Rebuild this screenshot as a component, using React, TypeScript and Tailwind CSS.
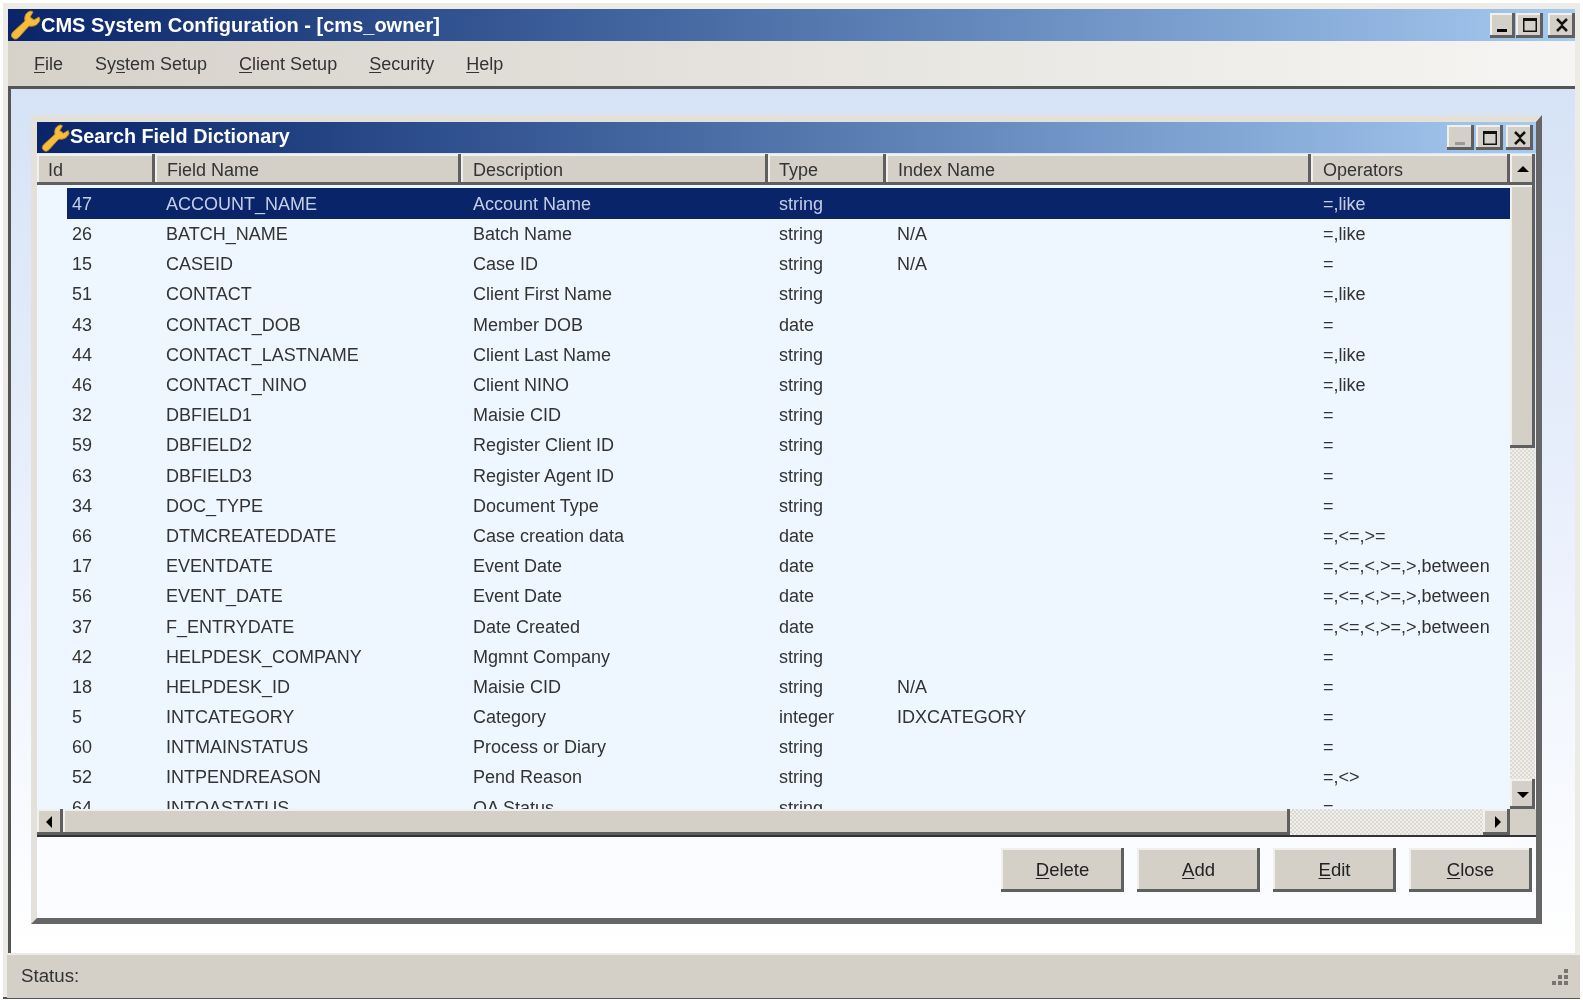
import type { ReactNode } from 'react';

type Row = [string, string, string, string, string, string];

const rows: Row[] = [
  ['26', 'BATCH_NAME', 'Batch Name', 'string', 'N/A', '=,like'],
  ['15', 'CASEID', 'Case ID', 'string', 'N/A', '='],
  ['51', 'CONTACT', 'Client First Name', 'string', '', '=,like'],
  ['43', 'CONTACT_DOB', 'Member DOB', 'date', '', '='],
  ['44', 'CONTACT_LASTNAME', 'Client Last Name', 'string', '', '=,like'],
  ['46', 'CONTACT_NINO', 'Client NINO', 'string', '', '=,like'],
  ['32', 'DBFIELD1', 'Maisie CID', 'string', '', '='],
  ['59', 'DBFIELD2', 'Register Client ID', 'string', '', '='],
  ['63', 'DBFIELD3', 'Register Agent ID', 'string', '', '='],
  ['34', 'DOC_TYPE', 'Document Type', 'string', '', '='],
  ['66', 'DTMCREATEDDATE', 'Case creation data', 'date', '', '=,<=,>='],
  ['17', 'EVENTDATE', 'Event Date', 'date', '', '=,<=,<,>=,>,between'],
  ['56', 'EVENT_DATE', 'Event Date', 'date', '', '=,<=,<,>=,>,between'],
  ['37', 'F_ENTRYDATE', 'Date Created', 'date', '', '=,<=,<,>=,>,between'],
  ['42', 'HELPDESK_COMPANY', 'Mgmnt Company', 'string', '', '='],
  ['18', 'HELPDESK_ID', 'Maisie CID', 'string', 'N/A', '='],
  ['5', 'INTCATEGORY', 'Category', 'integer', 'IDXCATEGORY', '='],
  ['60', 'INTMAINSTATUS', 'Process or Diary', 'string', '', '='],
  ['52', 'INTPENDREASON', 'Pend Reason', 'string', '', '=,<>'],
  ['64', 'INTQASTATUS', 'QA Status', 'string', '', '='],
];

const bevel = 'bg-[#d4d0c8] shadow-[inset_-3px_-3px_0_#5f5f5f,inset_2px_2px_0_#f2f0ec]';
const track =
  'bg-[repeating-conic-gradient(#dcd9d2_0_25%,#f0eeea_0_50%)] bg-[length:4px_4px]';

const WrenchIcon = ({ className }: { className: string }) => (
  <svg viewBox="0 0 32 32" className={className}>
    <path
      d="M22 2C17 3 15 7 16 12L4 23C2 25 2 28 4 29C6 31 8 30 10 28L20 17C25 18 29 16 31 11L30 8L25 11L21 8L24 3Z"
      fill="#f6bd3c"
      stroke="#c98a17"
      strokeWidth="1"
      strokeLinejoin="round"
    />
  </svg>
);

const WinButton = ({
  kind,
  disabled,
  w,
}: {
  kind: 'min' | 'max' | 'close';
  disabled?: boolean;
  w: string;
}) => (
  <div className={`flex h-[25px] items-center justify-center ${w} ${bevel}`}>
    <svg viewBox="0 0 20 18" className="h-[18px] w-[20px]">
      {kind === 'min' && <rect x="4" y="13" width="10" height="3" fill={disabled ? '#9a9a96' : '#000'} />}
      {kind === 'max' && (
        <path d="M3 2h14v14H3zM4.500 5v9.500h11V5z" fill="#111" fillRule="evenodd" />
      )}
      {kind === 'close' && (
        <path d="M5 3l5 5 5-5M5 15l5-5 5 5" fill="none" stroke="#111" strokeWidth="2.500" />
      )}
    </svg>
  </div>
);

const Arrow = ({ dir }: { dir: 'up' | 'down' | 'left' | 'right' }) => {
  const d = {
    up: 'M7 3l6 6H1z',
    down: 'M1 5h12L7 11z',
    left: 'M9 1v12L3 7z',
    right: 'M5 1v12l6-6z',
  }[dir];
  return (
    <svg viewBox="0 0 14 14" className="h-[14px] w-[14px]">
      <path d={d} fill="#000" />
    </svg>
  );
};

const MenuItem = ({ before, mark, after }: { before?: string; mark: string; after: string }) => (
  <span>
    {before}
    <span className="underline underline-offset-2">{mark}</span>
    {after}
  </span>
);

const ActionButton = ({ mark, rest }: { mark: string; rest: string }) => (
  <div className={`flex h-[44px] w-[123px] items-center justify-center text-[18.5px] text-[#222] ${bevel}`}>
    <span className="underline underline-offset-2">{mark}</span>
    {rest}
  </div>
);

const HeaderCell = ({ w, pl, children }: { w: string; pl: string; children: ReactNode }) => (
  <div className={`flex h-full shrink-0 items-center ${w} ${pl} ${bevel} text-[#333]`}>{children}</div>
);

const Cell = ({ w, pl, children }: { w: string; pl: string; children: ReactNode }) => (
  <div className={`shrink-0 whitespace-nowrap ${w} ${pl}`}>{children}</div>
);

const RowCells = ({ r }: { r: Row }) => (
  <>
    <Cell w="w-[305px]" pl="pl-[11px]">{r[1]}</Cell>
    <Cell w="w-[307px]" pl="pl-[13px]">{r[2]}</Cell>
    <Cell w="w-[118px]" pl="pl-[12px]">{r[3]}</Cell>
    <Cell w="w-[426px]" pl="pl-[12px]">{r[4]}</Cell>
    <Cell w="w-[169px]" pl="pl-[12px]">{r[5]}</Cell>
  </>
);

export default function App() {
  return (
    <div className="h-[1000px] w-[1583px] overflow-hidden bg-white pt-[3px] pl-[3px] font-['Liberation_Sans',Arial,sans-serif] blur-[0.6px]">
      <div className="flex h-[996px] w-[1577px] flex-col bg-[#ecebe6] px-[5px] pt-[6px] pb-[1px] shadow-[inset_0_-2px_0_#555]">
        {/* main title bar */}
        <div className="flex h-[32px] shrink-0 items-center bg-gradient-to-r from-[#0a246a] to-[#a6caf0] pl-[1px]">
          <WrenchIcon className="h-[32px] w-[32px] shrink-0" />
          <span className="pb-[1px] text-[20px] font-bold text-white">CMS System Configuration - [cms_owner]</span>
          <div className="ml-auto flex items-center">
            <WinButton kind="min" w="w-[25px]" />
            <div className="w-[1px]" />
            <WinButton kind="max" w="w-[27px]" />
            <div className="w-[5px]" />
            <WinButton kind="close" w="w-[27px]" />
          </div>
        </div>

        {/* menu */}
        <div className="flex h-[45px] shrink-0 items-center gap-[32px] bg-gradient-to-r from-[#d6d2ca] to-[#f6f5f3] pt-[2px] pl-[26px] text-[18px] text-[#333]">
          <MenuItem mark="F" after="ile" />
          <MenuItem before="Sy" mark="s" after="tem Setup" />
          <MenuItem mark="C" after="lient Setup" />
          <MenuItem mark="S" after="ecurity" />
          <MenuItem mark="H" after="elp" />
        </div>

        {/* mdi area */}
        <div className="flex flex-1 flex-col border-t-[3px] border-l-[3px] border-t-[#555] border-l-[#555] bg-gradient-to-b from-[#d6e3f6] via-[#eaf0fc] to-white pt-[26px] pl-[20px]">
          <div className="flex h-[809px] w-[1511px] flex-col border-t-[7px] border-r-[6px] border-b-[6px] border-l-[6px] border-t-[#e4e1db] border-r-[#666] border-b-[#666] border-l-[#e4e1db]">
            {/* child title bar */}
            <div className="flex h-[31px] shrink-0 items-center bg-gradient-to-r from-[#0a246a] to-[#a6caf0] pr-[3px] pl-[3px]">
              <WrenchIcon className="h-[30px] w-[30px] shrink-0" />
              <span className="pb-[2px] text-[19.8px] font-bold text-white">Search Field Dictionary</span>
              <div className="ml-auto flex items-center">
                <WinButton kind="min" disabled w="w-[27px]" />
                <div className="w-[2px]" />
                <WinButton kind="max" w="w-[27px]" />
                <div className="w-[3px]" />
                <WinButton kind="close" w="w-[27px]" />
              </div>
            </div>

            {/* list + vertical scrollbar */}
            <div className="mt-[1px] flex h-[655px] shrink-0 text-[18px] leading-none">
              <div className="flex h-full w-[1473px] flex-col overflow-hidden bg-[#eef6ff]">
                <div className="flex h-[31px] shrink-0">
                  <HeaderCell w="w-[118px]" pl="pl-[11px]">Id</HeaderCell>
                  <HeaderCell w="w-[306px]" pl="pl-[12px]">Field Name</HeaderCell>
                  <HeaderCell w="w-[307px]" pl="pl-[12px]">Description</HeaderCell>
                  <HeaderCell w="w-[118px]" pl="pl-[11px]">Type</HeaderCell>
                  <HeaderCell w="w-[425px]" pl="pl-[12px]">Index Name</HeaderCell>
                  <HeaderCell w="w-[199px]" pl="pl-[12px]">Operators</HeaderCell>
                </div>
                <div className="mt-[3px] ml-[30px] flex h-[31px] shrink-0 items-center bg-[#0a246a] text-[#c4cfe6]">
                  <Cell w="w-[88px]" pl="pl-[5px]">47</Cell>
                  <RowCells r={['47', 'ACCOUNT_NAME', 'Account Name', 'string', '', '=,like']} />
                </div>
                {rows.map((r) => (
                  <div key={r[0]} className="flex h-[30.2px] shrink-0 items-center text-[#333]">
                    <Cell w="w-[118px]" pl="pl-[35px]">{r[0]}</Cell>
                    <RowCells r={r} />
                  </div>
                ))}
              </div>
              <div className={`flex h-full w-[25px] flex-col ${track}`}>
                <div className={`flex h-[31px] shrink-0 items-center justify-center ${bevel}`}>
                  <Arrow dir="up" />
                </div>
                <div className={`h-[263px] shrink-0 ${bevel}`} />
                <div className="flex-1" />
                <div className={`flex h-[30px] shrink-0 items-center justify-center ${bevel}`}>
                  <Arrow dir="down" />
                </div>
              </div>
            </div>

            {/* horizontal scrollbar */}
            <div className="flex h-[26px] shrink-0 bg-[#d4d0c8]">
              <div className={`flex h-full w-[26px] shrink-0 items-center justify-center ${bevel}`}>
                <Arrow dir="left" />
              </div>
              <div className={`h-full w-[1227px] shrink-0 ${bevel}`} />
              <div className={`h-full w-[193px] shrink-0 ${track}`} />
              <div className={`flex h-full w-[27px] shrink-0 items-center justify-center ${bevel}`}>
                <Arrow dir="right" />
              </div>
            </div>

            {/* buttons */}
            <div className="flex flex-1 items-start justify-end gap-[13px] border-t-[2px] border-t-[#333] bg-[#fbfcff] pt-[11px] pr-[4px]">
              <ActionButton mark="D" rest="elete" />
              <ActionButton mark="A" rest="dd" />
              <ActionButton mark="E" rest="dit" />
              <ActionButton mark="C" rest="lose" />
            </div>
          </div>
        </div>

        {/* status bar */}
        <div className="mt-[2px] mr-[-5px] ml-[-1px] flex h-[43px] shrink-0 items-center justify-between bg-[#d4d0c8] pr-[10px] pl-[14px] text-[18.7px] text-[#333]">
          <span>Status:</span>
          <svg viewBox="0 0 20 20" className="h-[20px] w-[20px]">
            <path d="M14 2h4v4h-4zM8 8h4v4H8zM14 8h4v4h-4zM2 14h4v4H2zM8 14h4v4H8zM14 14h4v4h-4z" fill="#77756f" />
          </svg>
        </div>
      </div>
    </div>
  );
}
